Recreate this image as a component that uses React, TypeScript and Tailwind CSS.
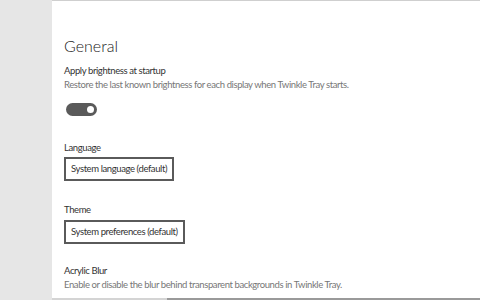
import React from 'react';

const font = { fontFamily: 'Lato, "Noto Sans", sans-serif' };

const Select: React.FC<{ value: string }> = ({ value }) => (
  <div className="flex">
    <div className="flex h-[24px] items-center border-2 border-[#5a5a5a] px-[5px] text-[9.5px] leading-[14px] tracking-[-0.4px] text-[#333]">
      {value}
    </div>
  </div>
);

const App: React.FC = () => {
  return (
    <div className="flex h-[300px] w-[480px] overflow-hidden bg-white" style={font}>
      <div className="w-[52px] shrink-0 bg-[#e6e6e6]" />
      <div className="flex flex-1 flex-col">
        <div className="h-px bg-[#cfcfcf]" />
        <div className="flex flex-1 flex-col pl-[12px] pt-[35px] text-[9.5px] leading-[14px] tracking-[-0.4px]">
          <h1 className="text-[16px] font-light leading-[20px] tracking-normal text-[#222]">General</h1>

          <div className="mt-[8px] text-[#333]">Apply brightness at startup</div>
          <div className="text-[#777]">
            Restore the last known brightness for each display when Twinkle Tray starts.
          </div>

          <div className="mt-[11px] ml-[2px] flex h-[13px] w-[31px] items-center justify-end rounded-full bg-[#5a5a5a] pr-[3px]">
            <div className="h-[7px] w-[7px] rounded-full bg-white" />
          </div>

          <div className="mt-[25px] text-[#333]">Language</div>
          <div className="mt-[2px]">
            <Select value="System language (default)" />
          </div>

          <div className="mt-[22px] text-[#333]">Theme</div>
          <div className="mt-[3px]">
            <Select value="System preferences (default)" />
          </div>

          <div className="mt-[20px] text-[#333]">Acrylic Blur</div>
          <div className="text-[#777]">
            Enable or disable the blur behind transparent backgrounds in Twinkle Tray.
          </div>
        </div>
        <div className="flex h-[2px]">
          <div className="w-[115px] bg-[#d4d4d4]" />
          <div className="flex-1 bg-[#9a9a9a]" />
        </div>
      </div>
    </div>
  );
};

export default App;
